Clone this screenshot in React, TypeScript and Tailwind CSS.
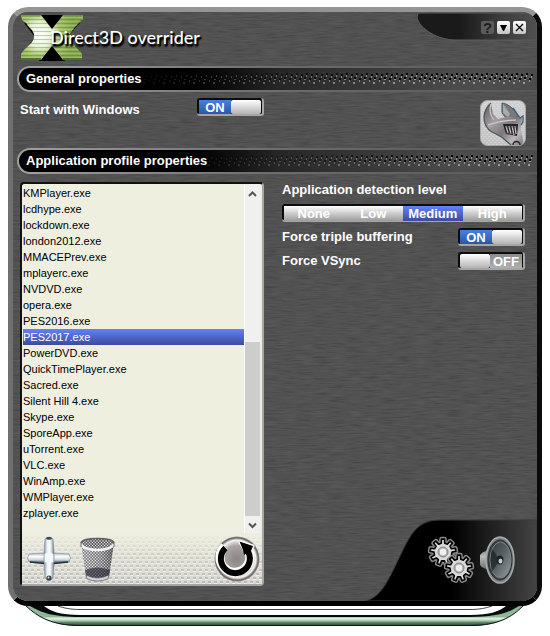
import React, { useState } from 'react';

const profiles = [
  'KMPlayer.exe',
  'lcdhype.exe',
  'lockdown.exe',
  'london2012.exe',
  'MMACEPrev.exe',
  'mplayerc.exe',
  'NVDVD.exe',
  'opera.exe',
  'PES2016.exe',
  'PES2017.exe',
  'PowerDVD.exe',
  'QuickTimePlayer.exe',
  'Sacred.exe',
  'Silent Hill 4.exe',
  'Skype.exe',
  'SporeApp.exe',
  'uTorrent.exe',
  'VLC.exe',
  'WinAmp.exe',
  'WMPlayer.exe',
  'zplayer.exe',
];

const levels = ['None', 'Low', 'Medium', 'High'];

const gearPath = (cx: number, cy: number, inner: number, outer: number, teeth: number) => {
  const step = (Math.PI * 2) / teeth;
  const points: string[] = [];
  for (let i = 0; i < teeth; i++) {
    const a = i * step - Math.PI / 2;
    [
      [inner, -0.27],
      [outer, -0.17],
      [outer, 0.17],
      [inner, 0.27],
    ].forEach(([r, k]) => {
      points.push(`${(cx + r * Math.cos(a + k * step)).toFixed(2)} ${(cy + r * Math.sin(a + k * step)).toFixed(2)}`);
    });
  }
  return `M${points.join('L')}Z`;
};

const BrushedMetal: React.FC = () => (
  <svg className="absolute inset-0 w-full h-full" aria-hidden="true">
    <filter id="brushed" x="0" y="0" width="100%" height="100%">
      <feTurbulence type="fractalNoise" baseFrequency="0.06 0.6" numOctaves="2" seed="4" />
      <feColorMatrix values="0.16 0 0 0 0.232  0.16 0 0 0 0.232  0.16 0 0 0 0.232  0 0 0 0 1" colorInterpolationFilters="sRGB" />
    </filter>
    <rect width="100%" height="100%" fill="#505050" />
    <rect width="100%" height="100%" filter="url(#brushed)" />
    <rect width="100%" height="100%" fill="#000" opacity="0.08" />
  </svg>
);

const Logo: React.FC = () => (
  <svg width="62" height="49" viewBox="0 0 62 49" aria-hidden="true">
    <defs>
      <radialGradient id="xGlow" gradientUnits="userSpaceOnUse" cx="19" cy="23" r="34">
        <stop offset="0" stopColor="#ffffff" />
        <stop offset="0.35" stopColor="#e8f3d4" />
        <stop offset="0.6" stopColor="#a3c26c" />
        <stop offset="1" stopColor="#86a850" />
      </radialGradient>
      <pattern id="xLines" width="62" height="4" patternUnits="userSpaceOnUse">
        <rect y="3" width="62" height="1" fill="#42601c" opacity="0.3" />
        <rect y="1" width="62" height="1" fill="#fff" opacity="0.18" />
      </pattern>
    </defs>
    <path d="M18 3H44L31 20ZM18 49L31 30L44 49ZM3 11L14 25L3 39L7 40V36H9V40H11V35H14V15H11V10H9V14H7V10ZM59 11L46 25L59 39L55 40V36H52V35H49V15H52V13H55V10Z" fill="#000" />
    <path d="M0 3H20L24 8L27 12L31 17L35 12L39 7L42 3H62V8H60L57 12L54 15L51 19L48 23V26L51 30L54 34L58 38L61 42V48H42L39 44L35 39L31 34L27 39L23 44L20 48H0V42L3 38L7 34L11 30L13 26V22L11 18L8 15L5 11L1 8Z" fill="url(#xGlow)" />
    <path d="M0 3H20L31 17L42 3H62V8L48 23V26L61 42V48H42L31 34L20 48H0V42L13 26V22L1 8Z" fill="url(#xLines)" />
    <path d="M1 4H19M43 4H61" fill="none" stroke="#6b8f35" />
    <path d="M0 47H20M42 47H61" stroke="#4d7421" strokeWidth="2" />
  </svg>
);

const Holes: React.FC = () => (
  <svg className="flex-1 h-3" aria-hidden="true">
    <defs>
      <pattern id="holes" width="10" height="12" patternUnits="userSpaceOnUse">
        <path d="M4 0h2v2h-2zM9 1h1v2h-1zM0 1h1v2h-1zM2 4h2v2h-2zM7 5h2v2h-2z" fill="#000" />
        <path d="M4 2h1v2h-1zM9 3h1v2h-1zM2 6h2v1h-2zM7 7h1v2h-1zM1 9h2v2h-2z" fill="#9a9a9a" />
      </pattern>
      <linearGradient id="holesFade">
        <stop offset="0" stopColor="#fff" stopOpacity="0.1" />
        <stop offset="0.7" stopColor="#fff" />
      </linearGradient>
      <mask id="holesMask">
        <rect width="100%" height="100%" fill="url(#holesFade)" />
      </mask>
    </defs>
    <rect width="100%" height="12" fill="url(#holes)" mask="url(#holesMask)" />
  </svg>
);

const SectionBar: React.FC<{ title: string }> = ({ title }) => (
  <div className="ml-1 rounded-l-[13px] bg-linear-to-r from-[#a0a0a0] via-[#6c6c6c] via-50% to-[#585858] py-0.5 pl-0.5">
    <div className="flex h-[22px] items-center rounded-l-[11px] bg-linear-to-r from-black from-25% via-[#262626] via-50% to-[#4c4c4c] to-85% pr-1 pl-[7px]">
      <h2 className="text-[13px] leading-4 font-bold whitespace-nowrap text-white">{title}</h2>
      <Holes />
    </div>
  </div>
);

const Toggle: React.FC<{ id: string; defaultOn: boolean }> = ({ id, defaultOn }) => {
  const [on, setOn] = useState(defaultOn);
  return (
    <span className="relative flex h-[18px] w-[67px] shrink-0 rounded-[3px] border-r-2 border-b-2 border-[#a5a5a5] bg-[#0c0c0c] pt-0.5 pr-px pl-0.5">
      <input
        id={id}
        type="checkbox"
        checked={on}
        onChange={() => setOn(!on)}
        className="absolute inset-0 m-0 appearance-none"
      />
      {on ? (
        <>
          <span className="flex-1 bg-linear-to-b from-[#4681e4] to-[#2857a8] text-center text-[13px] leading-[15px] font-bold text-white">ON</span>
          <span className="w-[30px] rounded-xs bg-linear-to-b from-white to-[#b4b4b4]" />
        </>
      ) : (
        <>
          <span className="w-[30px] rounded-xs bg-linear-to-b from-white to-[#b4b4b4]" />
          <span className="flex-1 bg-linear-to-b from-[#8a8a8a] to-[#b0b0b0] text-center text-[13px] leading-[15px] font-bold text-white">OFF</span>
        </>
      )}
    </span>
  );
};

const DetectionLevel: React.FC = () => {
  const [level, setLevel] = useState('Medium');
  return (
    <fieldset className="min-w-0">
      <legend className="text-[13px] leading-4 font-bold">Application detection level</legend>
      <div className="mt-[6px] grid h-[18px] grid-cols-4 rounded-[3px] border-r-2 border-b-2 border-[#a5a5a5] bg-[#0c0c0c] pt-0.5 pr-px pl-0.5">
        {levels.map((name) => (
          <label
            key={name}
            className={
              name === level
                ? 'bg-linear-to-b from-[#6482fa] to-[#3c4b9b] text-center text-[13px] leading-[15px] font-bold'
                : 'bg-linear-to-b from-white to-[#9c9c9c] text-center text-[13px] leading-[15px] font-bold'
            }
          >
            <input type="radio" name="level" value={name} checked={name === level} onChange={() => setLevel(name)} className="sr-only" />
            {name}
          </label>
        ))}
      </div>
    </fieldset>
  );
};

const PlusIcon: React.FC = () => (
  <svg width="46" height="46" viewBox="0 0 46 46" aria-hidden="true">
    <defs>
      <linearGradient id="barV">
        <stop offset="0" stopColor="#7f8e99" />
        <stop offset="0.3" stopColor="#e6edf2" />
        <stop offset="0.55" stopColor="#ffffff" />
        <stop offset="0.8" stopColor="#c3ced6" />
        <stop offset="1" stopColor="#4d5c67" />
      </linearGradient>
      <linearGradient id="barH" x2="0" y2="1">
        <stop offset="0" stopColor="#a9b6bf" />
        <stop offset="0.35" stopColor="#ffffff" />
        <stop offset="0.7" stopColor="#c9d3da" />
        <stop offset="1" stopColor="#2c3a46" />
      </linearGradient>
    </defs>
    <path d="M3 18Q0 22 3 26L18 27H28L43 26Q46 22 43 18L28 17H18Z" fill="url(#barH)" stroke="#8795a0" strokeWidth="0.7" />
    <path d="M19 3Q23 -1 27 3L28 17L28 27L27 42Q23 47 19 42L18 27L18 17Z" fill="url(#barV)" stroke="#8795a0" strokeWidth="0.7" />
    <path d="M18.500 18Q23 15 27.500 18V26Q23 28 18.500 26Z" fill="#f6f9fb" />
    <path d="M4 26L18 27.5M28 27.5L42 26" stroke="#22303c" strokeWidth="1.3" />
    <ellipse cx="23" cy="2.4" rx="3" ry="1.4" fill="#3c4852" />
    <circle cx="23" cy="42" r="2.6" fill="#33404b" />
    <circle cx="22.5" cy="41.5" r="1" fill="#dce5eb" />
  </svg>
);

const TrashIcon: React.FC = () => (
  <svg width="35" height="46" viewBox="0 0 35 46" aria-hidden="true">
    <defs>
      <pattern id="mesh" width="3" height="3" patternUnits="userSpaceOnUse">
        <rect width="3" height="3" fill="#858588" />
        <path d="M0 0h1v1h-1zM1.5 1.5h1v1h-1z" fill="#f0f0f0" />
        <path d="M1.5 0h1v1h-1zM0 1.5h1v1h-1z" fill="#3a3a3e" />
      </pattern>
      <linearGradient id="binShade">
        <stop offset="0" stopColor="#fff" stopOpacity="0.3" />
        <stop offset="0.5" stopColor="#fff" stopOpacity="0.15" />
        <stop offset="1" stopColor="#000" stopOpacity="0.3" />
      </linearGradient>
    </defs>
    <path d="M1 7L6 40Q17 46 29 40L34 7Z" fill="url(#mesh)" />
    <path d="M1 7L6 40Q17 46 29 40L34 7Z" fill="url(#binShade)" />
    <path d="M5 34Q17 29 30 34L29 40Q17 45 6 40Z" fill="#1c1c2a" opacity="0.6" />
    <path d="M1 7C2 1 33 1 34 7C31 16 4 16 1 7Z" fill="url(#mesh)" />
    <path d="M1 7C2 1 33 1 34 7" fill="none" stroke="#5e5e63" strokeWidth="1.5" />
    <path d="M1 8C4 16 31 16 34 8" fill="none" stroke="#f1f1f4" strokeWidth="2.4" />
    <path d="M1 7V11M34 7V11" stroke="#68686d" />
    <path d="M6 39Q17 45 29 39L28 43Q17 47 7 43Z" fill="#d2d2da" stroke="#5a5a64" strokeWidth="0.7" />
  </svg>
);

const ReloadIcon: React.FC = () => (
  <svg width="46" height="46" viewBox="0 0 46 46" aria-hidden="true">
    <defs>
      <radialGradient id="disc">
        <stop offset="0" stopColor="#8b8683" />
        <stop offset="0.6" stopColor="#a9a5a2" />
        <stop offset="0.84" stopColor="#f4f3f2" />
        <stop offset="0.94" stopColor="#6b6562" />
        <stop offset="1" stopColor="#8e8e8e" />
      </radialGradient>
    </defs>
    <circle cx="23" cy="23" r="22.5" fill="url(#disc)" />
    <path d="M10.5 10.5A15 15 0 1 0 34 14" fill="none" stroke="#fff" strokeWidth="9" />
    <path d="M26 6L39 10L33 19Z" fill="#fff" stroke="#fff" strokeWidth="3" strokeLinejoin="round" />
    <path d="M11.5 12A14.5 14.5 0 1 0 33 14" fill="none" stroke="#000" strokeWidth="6" />
    <path d="M25.5 5.5L39 10L37 15L30 19L29 14Z" fill="#000" />
  </svg>
);

const WrenchIcon: React.FC = () => (
  <svg width="46" height="46" viewBox="0 0 46 46" aria-hidden="true">
    <defs>
      <linearGradient id="tile" x2="0" y2="1">
        <stop offset="0" stopColor="#cfcfcf" />
        <stop offset="1" stopColor="#c2c2c2" />
      </linearGradient>
      <linearGradient id="steel" x2="1" y2="1">
        <stop offset="0" stopColor="#5f585b" />
        <stop offset="0.35" stopColor="#a59ea1" />
        <stop offset="0.6" stopColor="#7d767a" />
        <stop offset="0.8" stopColor="#bcb7b9" />
        <stop offset="1" stopColor="#79757a" />
      </linearGradient>
      <pattern id="tileDots" width="4" height="4" patternUnits="userSpaceOnUse">
        <path d="M0 0h2v1h-2zM2 2h2v1h-2z" fill="#fff" opacity="0.25" />
      </pattern>
    </defs>
    <rect x="0.5" y="0.5" width="45" height="45" rx="7" fill="url(#tile)" stroke="#a5a5a5" />
    <rect x="1" y="1" width="44" height="44" rx="7" fill="url(#tileDots)" />
    <path d="M22 3C29 4 34 9 39 17L26 18L22 13Z" fill="#777b7f" stroke="#43596a" />
    <path d="M23 4L30 14L28 17L23 13Z" fill="#a9abad" />
    <path d="M11 3C7 6 4 12 4 17C4 24 7 29 12 32C18 35 21 36 24 39L31 45H41Q43 44 43 41L41 29L42 18L37 17L26 17L18 19L13 14L12 9Z" fill="url(#steel)" />
    <path d="M11 3C7 6 4 12 4 17C4 24 7 29 12 32C18 35 21 36 24 39L31 45" fill="none" stroke="#4b565f" strokeWidth="1.3" />
    <path d="M11 4C9 10 10 15 14 20" fill="none" stroke="#cfcbcd" strokeWidth="1.2" />
    <path d="M8 25C15 23 23 20 36 20" fill="none" stroke="#c9c4c6" strokeWidth="1.4" />
    <path d="M33 8L38 15L40 18L43 16V22L41 25" fill="none" stroke="#3f6078" strokeWidth="1.3" />
    <path d="M23 24L38 24L37 36L26 34Z" fill="#232024" />
    <path d="M26 26L28 33M29 26L31 34M32 26L34 35M35 26L36 34" stroke="#c9c4c6" strokeWidth="1.3" />
    <path d="M25 27H37M26 33L36 34" stroke="#5e585b" strokeWidth="0.8" />
    <path d="M33 45A3.5 3.5 0 0 1 40 45" fill="none" stroke="#222" strokeWidth="1.3" />
  </svg>
);

const GearsIcon: React.FC = () => (
  <svg width="48" height="48" viewBox="0 0 48 48" aria-hidden="true">
    {[
      [16, 16],
      [32, 32],
    ].map(([cx, cy]) => (
      <g key={cx}>
        <path d={gearPath(cx, cy, 9, 13, 9)} fill="none" stroke="#8a8a8a" strokeWidth="4.5" strokeLinejoin="round" />
        <path d={gearPath(cx, cy, 9, 13, 9)} fill="#dadada" stroke="#000" strokeWidth="1.6" strokeLinejoin="round" />
        <circle cx={cx} cy={cy} r="5" fill="#b4b4b4" stroke="#858585" />
        <circle cx={cx} cy={cy} r="3.2" fill="#f0f0f0" />
      </g>
    ))}
  </svg>
);

const SpeakerIcon: React.FC = () => (
  <svg width="36" height="48" viewBox="0 0 36 48" aria-hidden="true">
    <defs>
      <linearGradient id="cone" x2="1" y2="1">
        <stop offset="0" stopColor="#353b3f" />
        <stop offset="0.5" stopColor="#5a6267" />
        <stop offset="1" stopColor="#98a0a4" />
      </linearGradient>
      <linearGradient id="magnet" x2="0" y2="1">
        <stop offset="0" stopColor="#555" />
        <stop offset="0.4" stopColor="#bbb" />
        <stop offset="1" stopColor="#3a3a3a" />
      </linearGradient>
    </defs>
    <path d="M1 19Q3 16 7 15L14 7V41L8 33Q3 32 1 29Z" fill="url(#magnet)" />
    <ellipse cx="21" cy="24" rx="14" ry="23" fill="#7b8387" stroke="#a5acaf" strokeWidth="1.4" />
    <ellipse cx="21" cy="24" rx="12" ry="20" fill="#3b4246" stroke="#2b3134" />
    <ellipse cx="21.5" cy="24" rx="10.5" ry="18" fill="url(#cone)" stroke="#7d8589" />
    <path d="M21 24L13 13Q10 23 13 36Z" fill="#14181b" opacity="0.6" />
    <ellipse cx="21" cy="24" rx="3.4" ry="4.6" fill="#1d2225" />
    <ellipse cx="21.5" cy="25" rx="2" ry="2.6" fill="#c3cacd" />
  </svg>
);

const ChromeRim: React.FC = () => (
  <svg className="block h-5 w-full" viewBox="0 0 534 20" preserveAspectRatio="none" aria-hidden="true">
    <defs>
      <linearGradient id="rim" x2="0" y2="1">
        <stop offset="0" stopColor="#8fb89a" />
        <stop offset="0.55" stopColor="#8fb89a" />
        <stop offset="0.6" stopColor="#e3f1e2" />
        <stop offset="0.7" stopColor="#c6dfc8" />
        <stop offset="0.82" stopColor="#5f8a6a" />
        <stop offset="1" stopColor="#1f3a29" />
      </linearGradient>
    </defs>
    <path d="M18 0C30 11 44 20 72 20H462C490 20 504 11 515 0Z" fill="url(#rim)" />
    <path d="M22 0C34 7 46 11 72 11H462C488 11 500 7 511 0Z" fill="#050b0c" />
    <path d="M36 0C42 5 52 9 72 9H462C482 9 492 5 498 0Z" fill="#fff" />
    <path d="M50 0C56 2 62 3.5 72 3.5H462C472 3.5 478 2 484 0" fill="none" stroke="#111" strokeWidth="0.8" />
    <path d="M18 0C30 11 44 19.5 72 19.5H462C490 19.5 504 11 515 0" fill="none" stroke="#0b1710" />
  </svg>
);

const App: React.FC = () => {
  const [selected, setSelected] = useState('PES2017.exe');

  return (
    <div className="min-h-screen bg-white px-2 pt-[7px] pb-2 font-['Liberation_Sans',Arial,sans-serif] text-white">
      <main className="relative overflow-hidden rounded-[20px] border-t-[5px] border-r-[5px] border-b-[5px] border-l-[5px] border-t-[#959595] border-r-[#0c0c0c] border-b-black border-l-[#707070]">
        <BrushedMetal />
        <div className="relative">
          <header className="flex h-[54px] items-start justify-between pl-2">
            <div className="flex items-center">
              <Logo />
              <h1 className="-ml-[33px] font-['Lato','Open_Sans',sans-serif] text-[18px] leading-6 font-medium whitespace-nowrap text-white [text-shadow:2px_2px_1px_#000,1px_3px_2px_#000]">
                Direct3D overrider
              </h1>
            </div>
            <div className="relative flex h-[30px] w-[121px] items-center justify-end gap-[3px] pr-[11px]">
              <svg className="absolute inset-0" width="121" height="30" viewBox="0 0 121 30" aria-hidden="true">
                <defs>
                  <linearGradient id="corner">
                    <stop offset="0.35" stopColor="#1a1a1a" />
                    <stop offset="0.7" stopColor="#3c3c3c" />
                    <stop offset="1" stopColor="#505050" />
                  </linearGradient>
                </defs>
                <path d="M4 1H121V28H40C22 28 3 17 1 5Q1 1 4 1Z" fill="url(#corner)" stroke="#5c5c5c" />
              </svg>
              <button className="relative size-[13px] rounded-xs bg-[#5c5c5c] text-center text-[15px] leading-[14px] font-bold text-[#1c1c1c]">?</button>
              <button aria-label="Minimize" className="relative flex size-[13px] items-center justify-center rounded-xs bg-linear-to-b from-white to-[#c4c4c4]">
                <svg width="9" height="9" viewBox="0 0 9 9">
                  <path d="M1 2H8L5 8H4Z" fill="#000" />
                </svg>
              </button>
              <button aria-label="Close" className="relative flex size-[13px] items-center justify-center rounded-xs bg-linear-to-b from-white to-[#c4c4c4]">
                <svg width="9" height="9" viewBox="0 0 9 9">
                  <path d="M1 1L8 8M8 1L1 8" stroke="#000" strokeWidth="1.3" />
                </svg>
              </button>
            </div>
          </header>

          <SectionBar title="General properties" />
          <div className="flex h-14 items-start pt-[6px] pr-[11px] pl-[7px]">
            <label htmlFor="startup" className="w-[177px] pt-1 text-[13px] leading-4 font-bold">
              Start with Windows
            </label>
            <Toggle id="startup" defaultOn />
            <button aria-label="Settings" className="mt-[2px] ml-auto">
              <WrenchIcon />
            </button>
          </div>

          <SectionBar title="Application profile properties" />
          <div className="flex pt-2 pl-[7px]">
            <section className="mb-[15px] w-[244px] shrink-0 rounded-sm border-t-2 border-r-2 border-b-2 border-l-2 border-t-[#111] border-r-[#a5a5a5] border-b-[#a5a5a5] border-l-[#111] bg-[#efefe0]">
              <div className="flex pt-px pr-0.5 pl-px text-[11px] leading-4 text-black">
                <ul className="flex-1 pb-3">
                  {profiles.map((name) => (
                    <li key={name}>
                      <button
                        onClick={() => setSelected(name)}
                        className={
                          name === selected
                            ? 'block w-full bg-linear-to-b from-[#6482fa] to-[#3c4b9b] text-left text-white'
                            : 'block w-full text-left'
                        }
                      >
                        {name}
                      </button>
                    </li>
                  ))}
                </ul>
                <div className="flex w-4 flex-col items-center border-l border-white bg-[#f0f0f0]">
                  <svg className="h-[17px] w-[9px] shrink-0" viewBox="0 0 9 17" aria-hidden="true">
                    <path d="M1 11L4.5 7.5L8 11" fill="none" stroke="#555" strokeWidth="2" />
                  </svg>
                  <div className="mt-[140px] w-full flex-1 bg-[#cdcdcd]" />
                  <svg className="h-[17px] w-[9px] shrink-0" viewBox="0 0 9 17" aria-hidden="true">
                    <path d="M1 7.5L4.5 11L8 7.5" fill="none" stroke="#555" strokeWidth="2" />
                  </svg>
                </div>
              </div>
              <div className="relative flex h-[51px] items-center pr-0.5 pl-1">
                <svg className="absolute inset-0 h-full w-full" aria-hidden="true">
                  <defs>
                    <pattern id="dimples" width="6" height="8" patternUnits="userSpaceOnUse">
                      <path d="M0 0h3v2h-3zM3 4h3v2h-3z" fill="#9d9c95" />
                      <path d="M0 2h3v1h-3zM3 6h3v1h-3z" fill="#fff" />
                    </pattern>
                    <linearGradient id="trayShade" x2="0" y2="1">
                      <stop offset="0" stopColor="#efefe0" />
                      <stop offset="0.3" stopColor="#ebebdf" stopOpacity="0.75" />
                      <stop offset="1" stopColor="#dcdcd6" stopOpacity="0.45" />
                    </linearGradient>
                  </defs>
                  <rect width="100%" height="100%" fill="#d8d8d2" />
                  <rect width="100%" height="100%" fill="url(#dimples)" />
                  <rect width="100%" height="100%" fill="url(#trayShade)" />
                </svg>
                <button aria-label="Add profile" className="relative">
                  <PlusIcon />
                </button>
                <button aria-label="Delete profile" className="relative ml-2">
                  <TrashIcon />
                </button>
                <button aria-label="Reload profiles" className="relative ml-auto">
                  <ReloadIcon />
                </button>
              </div>
            </section>

            <div className="flex min-w-0 flex-1 flex-col justify-between pl-[18px]">
              <div className="pr-3">
                <DetectionLevel />
                <div className="mt-[6px] flex items-center justify-between">
                  <label htmlFor="buffering" className="text-[13px] leading-4 font-bold">
                    Force triple buffering
                  </label>
                  <Toggle id="buffering" defaultOn />
                </div>
                <div className="mt-[6px] flex items-center justify-between">
                  <label htmlFor="vsync" className="text-[13px] leading-4 font-bold">
                    Force VSync
                  </label>
                  <Toggle id="vsync" defaultOn={false} />
                </div>
              </div>

              <div className="relative flex h-[82px] w-[171px] items-center justify-end gap-1 self-end pr-[22px]">
                <svg className="absolute inset-0" width="171" height="82" viewBox="0 0 171 82" aria-hidden="true">
                  <defs>
                    <linearGradient id="dock">
                      <stop offset="0.5" stopColor="#000" />
                      <stop offset="1" stopColor="#444" />
                    </linearGradient>
                  </defs>
                  <path d="M0 82C17 77 24 57 35 35C45 14 52 1 74 1H171V82Z" fill="url(#dock)" stroke="#3a3a3a" />
                </svg>
                <button aria-label="Options" className="relative">
                  <GearsIcon />
                </button>
                <button aria-label="Sound" className="relative">
                  <SpeakerIcon />
                </button>
              </div>
            </div>
          </div>
        </div>
      </main>

      <ChromeRim />
    </div>
  );
};

export default App;
